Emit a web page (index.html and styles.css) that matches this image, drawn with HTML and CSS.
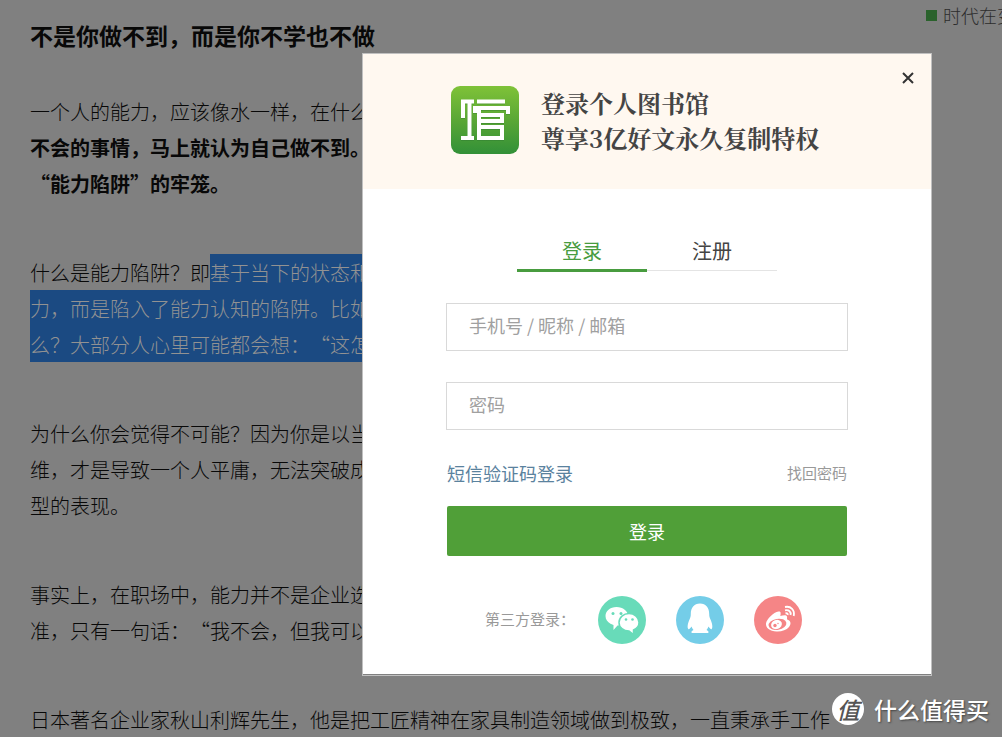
FILE: index.html
```html
<!DOCTYPE html>
<html lang="zh-CN">
<head>
<meta charset="utf-8">
<title>登录个人图书馆</title>
<link rel="stylesheet" href="styles.css">
</head>
<body>
<div class="page">
  <main class="article">
    <h1 class="article-title">不是你做不到，而是你不学也不做</h1>
    <p>一个人的能力，应该像水一样，在什么<br><b>不会的事情，马上就认为自己做不到。</b><br><b>“能力陷阱”的牢笼。</b></p>
    <p>什么是能力陷阱？即<mark>基于当下的状态和<br>力，而是陷入了能力认知的陷阱。比如<br>么？大部分人心里可能都会想：“这怎</mark></p>
    <p>为什么你会觉得不可能？因为你是以当<br>维，才是导致一个人平庸，无法突破成<br>型的表现。</p>
    <p>事实上，在职场中，能力并不是企业选<br>准，只有一句话：“我不会，但我可以</p>
    <p>日本著名企业家秋山利辉先生，他是把工匠精神在家具制造领域做到极致，一直秉承手工作</p>
  </main>
  <aside class="related"><a href="#">时代在变</a></aside>
</div>

<div class="dialog" role="dialog" aria-label="登录个人图书馆">
  <header class="dialog-head">
    <svg class="logo" viewBox="0 0 68 68" aria-hidden="true">
      <defs>
        <linearGradient id="leaf" x1="0" y1="0" x2="0" y2="1">
          <stop offset="0" stop-color="#7fc238"/>
          <stop offset="0.5" stop-color="#5aa735"/>
          <stop offset="1" stop-color="#329038"/>
        </linearGradient>
      </defs>
      <rect width="68" height="68" rx="9" fill="url(#leaf)"/>
      <g fill="none" stroke-width="4" stroke-linejoin="miter">
        <path stroke="#2c7430" opacity="0.35" transform="translate(0 1)" d="M12 32V15.500H23M18.500 15.500V52M10 52H23M26 15.500H54M24 27V22H57V28M28 22V52H51V41H28M28 35H51V29H28"/>
        <path stroke="#fff" d="M12 32V15.500H23M18.500 15.500V52M10 52H23M26 15.500H54M24 27V22H57V28M28 22V52H51V41H28M28 35H51V29H28"/>
      </g>
    </svg>
    <p class="slogan">登录个人图书馆<br>尊享3亿好文永久复制特权</p>
    <button class="close" type="button" aria-label="关闭">
      <svg viewBox="0 0 12 12" aria-hidden="true"><path d="M1 1L11 11M11 1L1 11"/></svg>
    </button>
  </header>
  <form class="login">
    <div class="tabs" role="tablist">
      <button class="tab active" type="button" role="tab" aria-selected="true">登录</button>
      <button class="tab" type="button" role="tab" aria-selected="false">注册</button>
    </div>
    <div class="fields">
      <input class="field" type="text" aria-label="手机号 / 昵称 / 邮箱" placeholder="手机号 / 昵称 / 邮箱">
      <input class="field" type="password" aria-label="密码" placeholder="密码">
    </div>
    <div class="links">
      <a class="sms" href="#">短信验证码登录</a>
      <a class="forgot" href="#">找回密码</a>
    </div>
    <button class="submit" type="submit">登录</button>
    <div class="social">
      <span class="social-label">第三方登录：</span>
      <a class="social-link" href="#" aria-label="微信">
        <svg viewBox="0 0 48 48" aria-hidden="true">
          <circle cx="24" cy="24" r="24" fill="#68dbb9"/>
          <path fill="#fff" d="M18.500 11C12 11 7.500 15 7.500 20C7.500 23.500 9.500 26 12.500 27.700L15.500 29L15.500 34L19.500 29.500C27 29.500 30 25 30 20C30 15 25 11 18.500 11Z"/>
          <path fill="#fff" stroke="#68dbb9" stroke-width="1.500" d="M31 17.500C25.500 17.500 21 21.500 21 26.500C21 31.500 25.500 35 31 35L35.500 38.500L35.500 34C39 32.500 41 29.800 41 26.500C41 21.500 36.500 17.500 31 17.500Z"/>
          <g fill="#68dbb9"><circle cx="15" cy="17.500" r="1.500"/><circle cx="23" cy="17.500" r="1.500"/><circle cx="28" cy="23.500" r="1.300"/><circle cx="34.500" cy="23.500" r="1.300"/></g>
        </svg>
      </a>
      <a class="social-link" href="#" aria-label="QQ">
        <svg viewBox="0 0 48 48" aria-hidden="true">
          <circle cx="24" cy="24" r="24" fill="#74cde8"/>
          <path fill="#fff" d="M24 7.500C18 7.500 14.800 12 14.800 18C14.800 20.500 14.300 21.500 13.500 23.500C11.700 27.500 11 31.500 12.300 33C13 33.800 14.500 32 15.500 30.500C16 32 16.800 33.200 17.500 34C15.500 34.800 14.800 36.500 16 37H32C33.200 36.500 32.500 34.800 30.500 34C31.200 33.200 32 32 32.500 30.500C33.500 32 35 33.800 35.700 33C37 31.500 36.300 27.500 34.500 23.500C33.700 21.500 33.200 20.500 33.200 18C33.200 12 30 7.500 24 7.500Z"/>
        </svg>
      </a>
      <a class="social-link" href="#" aria-label="微博">
        <svg viewBox="0 0 48 48" aria-hidden="true">
          <circle cx="24" cy="24" r="24" fill="#f58586"/>
          <path fill="#fff" d="M24.500 15.500C27 14.800 27 17.500 26.300 20C29 19 32.500 18.500 33 20.500C33.400 22 32.500 23 33.500 23.700C37.500 25 37 28.500 35 31C32.500 34 27.500 35.800 22.500 35.500C16 35.200 11.500 32 12 27.500C12.500 23.500 19.500 16 24.500 15.500Z"/>
          <ellipse cx="23.500" cy="28.300" rx="9" ry="5.500" fill="#f58586" transform="rotate(-10 23.500 28.300)"/>
          <ellipse cx="22.500" cy="28.500" rx="5.500" ry="4.500" fill="#fff" transform="rotate(-20 22.500 28.500)"/>
          <circle cx="21" cy="29.500" r="1.700" fill="#f58586"/>
          <circle cx="24" cy="27.500" r="0.700" fill="#f58586"/>
          <g fill="none" stroke="#fff" stroke-width="1.800"><path d="M31 11C37 9.800 41 14 39.700 20"/><path d="M31 14.300C35 13.500 37.300 16 36.500 19"/><path d="M31.500 17.300C33 17 34 17.700 33.700 19"/></g>
        </svg>
      </a>
    </div>
  </form>
</div>

<div class="watermark"><span class="seal">值</span><span>什么值得买</span></div>
</body>
</html>
```
FILE: styles.css
```css
* {
  box-sizing: border-box;
}

body {
  margin: 0;
  height: 100vh;
  overflow: hidden;
  position: relative;
  background: #808080;
  font-family: "Noto Sans CJK SC", sans-serif;
  text-spacing-trim: space-all;
  color: #080808;
}

a {
  text-decoration: none;
}

button,
input {
  font-family: inherit;
}

.page {
  display: flex;
  justify-content: space-between;
  align-items: flex-start;
  height: 100%;
  overflow: hidden;
}

.article {
  padding: 17px 0 0 30px;
  font-size: 20px;
  font-weight: 300;
  line-height: 36px;
  white-space: nowrap;
}

.article-title {
  margin: 0 0 41px;
  font-size: 23px;
  font-weight: 700;
}

.article p {
  margin: 0 0 53px;
}

.article b {
  font-weight: 700;
}

.article mark {
  padding: 4px 0 3px;
  background: #1b4a82;
  color: #929292;
}

.related {
  flex: 0 0 76px;
  display: flex;
  align-items: center;
  gap: 6px;
  overflow: hidden;
  white-space: nowrap;
  font-size: 18px;
  line-height: 30px;
}

.related::before {
  content: "";
  flex: none;
  width: 11px;
  height: 11px;
  background: #2a622c;
}

.related a {
  color: #2c2c2c;
  font-weight: 300;
}

.dialog {
  position: absolute;
  top: 53px;
  right: 70px;
  width: 570px;
  padding-bottom: 1px;
  border: 1px solid #c0c0c0;
}

.dialog-head {
  position: relative;
  display: flex;
  align-items: center;
  gap: 22px;
  height: 135px;
  padding: 0 0 3px 88px;
  background: #fff8f0;
}

.logo {
  width: 68px;
  height: 68px;
}

.slogan {
  margin: 0;
  color: #444;
  font-family: "Noto Serif CJK SC", "Noto Sans CJK SC", serif;
  font-size: 24px;
  font-weight: 700;
  line-height: 35px;
}

.close {
  position: absolute;
  top: 12px;
  right: 11px;
  display: grid;
  place-items: center;
  width: 24px;
  height: 24px;
  padding: 0;
  border: 0;
  background: none;
}

.close svg {
  width: 12px;
  height: 12px;
  stroke: #333;
  stroke-width: 2;
}

.login {
  padding: 42px 84px 30px;
  background: #fff;
}

.tabs {
  display: flex;
  justify-content: center;
}

.tab {
  width: 130px;
  height: 41px;
  padding: 0 0 2px;
  border: 0;
  background: linear-gradient(#e4e4e4, #e4e4e4) 0 39px / 100% 1px no-repeat;
  color: #444;
  font-size: 20px;
  line-height: 39px;
}

.tab.active {
  background: linear-gradient(#489c3f, #489c3f) 0 38px / 100% 3px no-repeat;
  color: #489c3f;
}

.fields {
  display: grid;
  gap: 31px;
  margin: 31px -1px 0;
}

.field {
  width: 100%;
  height: 48px;
  padding: 0 22px 4px;
  border: 1px solid #d9d9d9;
  background: #fff;
  color: #333;
  font-size: 18px;
}

.field::placeholder {
  color: #a0a0a0;
}

.links {
  display: flex;
  justify-content: space-between;
  align-items: center;
  height: 76px;
  padding-top: 9px;
}

.sms {
  color: #5a829e;
  font-size: 18px;
}

.forgot {
  color: #999;
  font-size: 15px;
}

.submit {
  display: block;
  width: 100%;
  height: 50px;
  padding: 0;
  border: 0;
  border-radius: 2px;
  background: #509f38;
  color: #fff;
  font-size: 18px;
}

.social {
  display: flex;
  align-items: center;
  gap: 30px;
  margin-top: 40px;
  padding-left: 38px;
}

.social-label {
  width: 83px;
  padding-bottom: 3px;
  color: #999;
  font-size: 15px;
  white-space: nowrap;
}

.social-link,
.social-link svg {
  display: block;
  width: 48px;
  height: 48px;
}

.watermark {
  position: absolute;
  right: 13px;
  bottom: 11px;
  display: flex;
  align-items: center;
  gap: 10px;
  color: #fff;
  font-size: 23px;
  font-weight: 500;
  line-height: 34px;
  text-shadow: 1px 1px 2px #444;
}

.seal {
  width: 32px;
  height: 32px;
  border-radius: 50%;
  background: #fff;
  color: #555;
  font-style: italic;
  line-height: 32px;
  text-align: center;
  text-shadow: none;
}
```
